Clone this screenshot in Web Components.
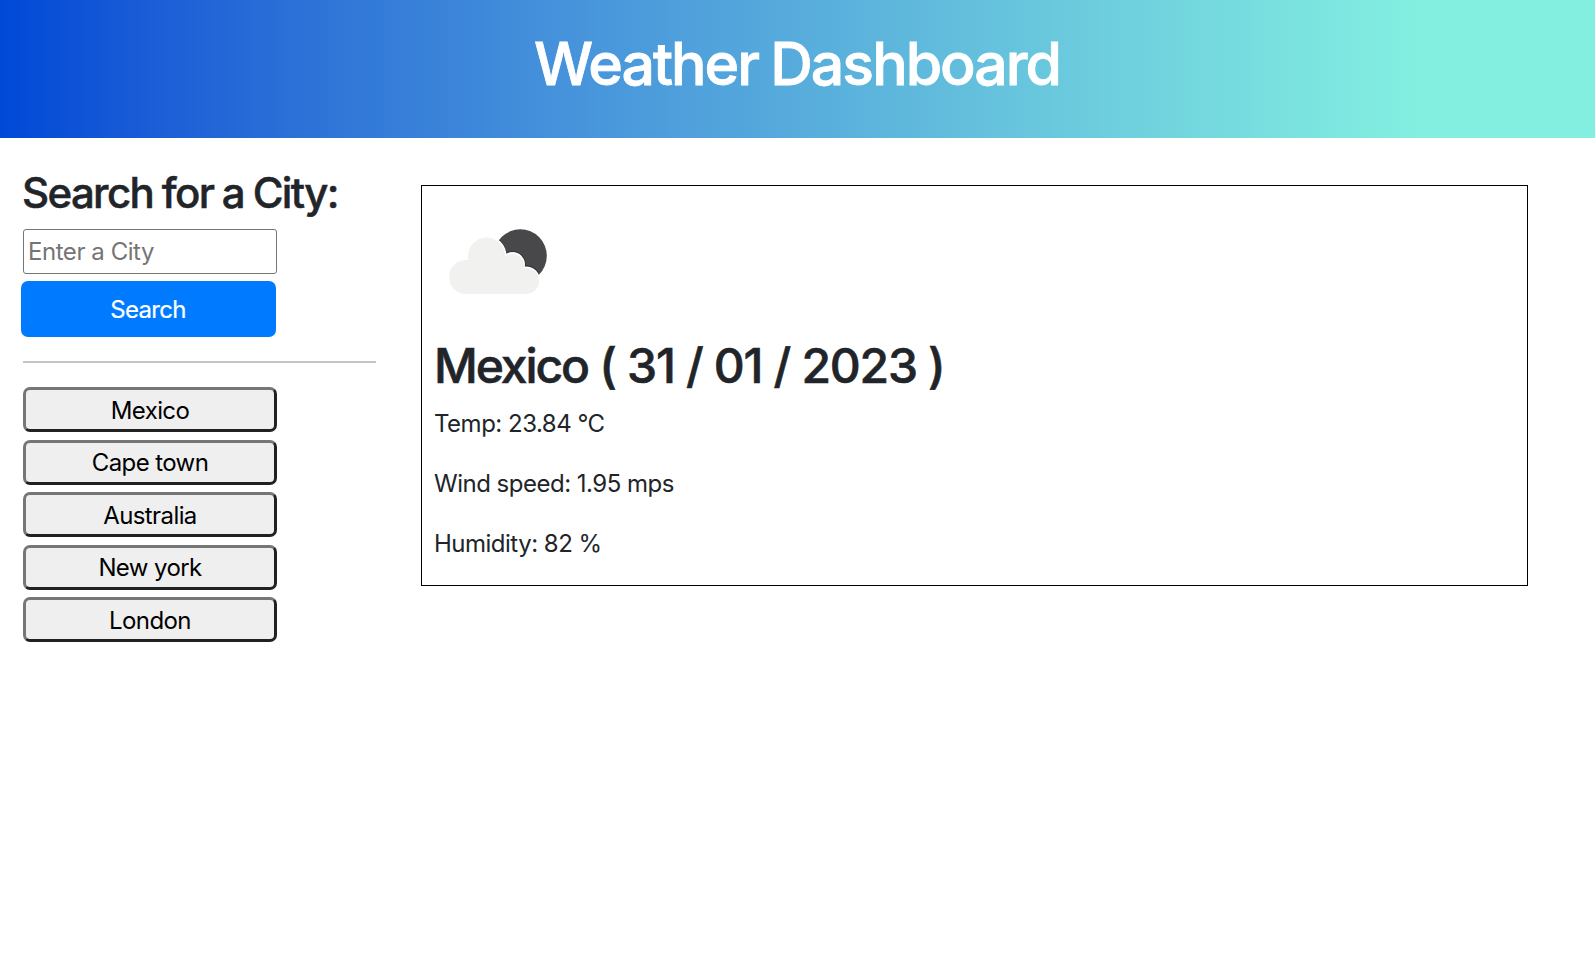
<!DOCTYPE html>
<html lang="en">
<head>
<meta charset="utf-8">
<title>Weather Dashboard</title>
<style>
body { margin: 0; background: #fff; color: #212529; font: 400 24px/36px Inter, "Liberation Sans", sans-serif; }
</style>
</head>
<body>
<weather-app></weather-app>
<script>
const define = (name, html) => customElements.define(name, class extends HTMLElement {
  constructor() {
    super();
    const t = document.createElement('template');
    t.innerHTML = html;
    this.attachShadow({ mode: 'open' }).append(t.content.cloneNode(true));
  }
});

define('app-header', `
<style>
:host { display: block; box-sizing: border-box; height: 138px; padding-top: 28px; text-align: center; color: #fff;
  background: linear-gradient(90deg, #0049d7 0%, #1a5cd7 9%, #2c72d7 19%, #438edb 33%, #6bcadd 67%, #83efe1 89%); }
h1 { margin: 0 1px 0 0; font-size: 59px; font-weight: 500; line-height: 72px; letter-spacing: -2px; word-spacing: -1.5px;
  -webkit-text-stroke: 0.8px; white-space: nowrap; }
</style>
<h1><slot></slot></h1>`);

define('city-button', `
<style>
:host { display: block; width: 254px; height: 45px; }
button { box-sizing: border-box; display: block; width: 100%; height: 100%; margin: 0; padding: 1px 0 0; border: 3px solid;
  border-color: #767676 #212121 #212121 #767676; border-radius: 7px; background: #efefef; color: #000;
  font: inherit; line-height: 39px; letter-spacing: -0.6px; }
:host(:nth-of-type(even)) button { padding: 1px 0 0; line-height: 38px; }
</style>
<button><slot></slot></button>`);

define('city-search', `
<style>
:host { display: block; }
h3 { margin: -1px 0 11px -1px; font-size: 42px; font-weight: 500; line-height: 50px; letter-spacing: -1.65px; word-spacing: -0.9px;
  -webkit-text-stroke: 0.5px; white-space: nowrap; }
input { box-sizing: border-box; display: block; width: 254px; height: 45px; margin: 0; padding: 1px 4px; border: 1px solid #767676;
  border-radius: 3px; background: #fff; font: inherit; letter-spacing: -0.45px; outline: none; }
input::placeholder { color: #757575; opacity: 1; }
button { box-sizing: border-box; display: block; width: 255px; height: 56px; margin: 7px 0 0 -2px; padding: 2px 1px 0 0; border: 0;
  border-radius: 7px; background: #007bff; color: #fff; font: inherit; -webkit-text-stroke: 0.2px #fff; letter-spacing: -0.7px; }
</style>
<h3>Search for a City:</h3>
<input type="text" placeholder="Enter a City">
<button>Search</button>`);

define('city-history', `
<style>
:host { display: grid; gap: 7.5px; margin-top: 24px; padding-top: 24px; border-top: 2px solid #c4c4c4; }
</style>
<slot></slot>`);

define('weather-icon', `
<style>
:host { display: block; width: 150px; height: 150px; }
svg { display: block; }
</style>
<svg width="150" height="150" viewBox="434 187 150 150">
  <circle cx="520.3" cy="255.8" r="26.500" fill="#48484a"/>
  <g fill="#fff" stroke="#343436" stroke-width="4" clip-path="url(#sun)">
    <circle cx="486.5" cy="256" r="18.6"/><circle cx="512.5" cy="264.5" r="11.5"/><circle cx="526" cy="280.5" r="13.2"/>
  </g>
  <clipPath id="sun"><circle cx="520.3" cy="255.8" r="26.3"/></clipPath>
  <g fill="#fff"><circle cx="486.500" cy="256" r="20"/><circle cx="512.5" cy="264.5" r="12.500"/><circle cx="526" cy="280.5" r="14"/></g>
  <g fill="#f1f1ef">
    <circle cx="486.500" cy="256" r="18.500"/><circle cx="466" cy="277" r="17"/><circle cx="512.500" cy="265.500" r="11.500"/>
    <circle cx="526" cy="281" r="13"/><path d="M466 262L486 255L512 262L526 280V294H466Z"/>
  </g>
</svg>`);

define('weather-card', `
<style>
:host { display: block; box-sizing: border-box; height: 401px; padding: 1px 12px; border: 1px solid #000; }
h2 { margin: 0 0 11px; font-size: 48px; font-weight: 500; line-height: 58px; letter-spacing: -1.2px; word-spacing: -0.3px;
  -webkit-text-stroke: 0.6px; white-space: nowrap; }
h2 span { letter-spacing: -2.1px; }
p { margin: 0 0 24px; letter-spacing: -0.5px; }
</style>
<weather-icon></weather-icon>
<h2><span>Mexico</span> ( 31 / 01 / 2023 )</h2>
<p>Temp: 23.84 °C</p>
<p>Wind speed: 1.95 mps</p>
<p>Humidity: 82 %</p>`);

define('weather-app', `
<style>
:host { display: block; }
main { display: grid; grid-template-columns: 353px 1107px; column-gap: 45px; padding: 31px 0 0 23px; align-items: start; }
weather-card { margin-top: 16px; }
aside { display: flow-root; }
</style>
<app-header>Weather Dashboard</app-header>
<main>
  <aside>
    <city-search></city-search>
    <city-history>
      <city-button>Mexico</city-button><city-button>Cape town</city-button><city-button>Australia</city-button><city-button>New york</city-button><city-button>London</city-button>
    </city-history>
  </aside>
  <weather-card></weather-card>
</main>`);
</script>
</body>
</html>
